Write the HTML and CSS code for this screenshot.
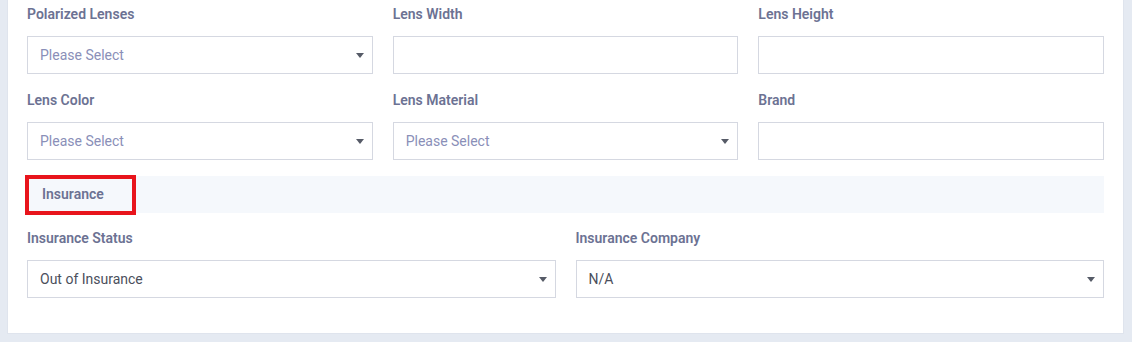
FILE: index.html
```html
<!DOCTYPE html>
<html lang="en">
<head>
    <meta charset="UTF-8">
    <meta name="viewport" content="width=device-width, initial-scale=1.0">
    <title>Frame Details</title>
    <link rel="stylesheet" href="styles.css">
</head>
<body>
   <div class="page">
       <div class="card">
           <!--镜片信息-->
           <div class="row row-3">
               <div class="field">
                   <label>Polarized Lenses</label>
                   <div class="select">
                       <select class="empty">
                           <option>Please Select</option>
                           <option>Yes</option>
                           <option>No</option>
                       </select>
                   </div>
               </div>
               <div class="field">
                   <label>Lens Width</label>
                   <input type="text">
               </div>
               <div class="field">
                   <label>Lens Height</label>
                   <input type="text">
               </div>
           </div>
           <div class="row row-3">
               <div class="field">
                   <label>Lens Color</label>
                   <div class="select">
                       <select class="empty">
                           <option>Please Select</option>
                       </select>
                   </div>
               </div>
               <div class="field">
                   <label>Lens Material</label>
                   <div class="select">
                       <select class="empty">
                           <option>Please Select</option>
                       </select>
                   </div>
               </div>
               <div class="field">
                   <label>Brand</label>
                   <input type="text">
               </div>
           </div>

           <!--保险-->
           <div class="section">
               <span class="section-title">Insurance</span>
           </div>
           <div class="row row-2">
               <div class="field">
                   <label>Insurance Status</label>
                   <div class="select">
                       <select>
                           <option>Out of Insurance</option>
                           <option>In Insurance</option>
                       </select>
                   </div>
               </div>
               <div class="field">
                   <label>Insurance Company</label>
                   <div class="select">
                       <select>
                           <option>N/A</option>
                       </select>
                   </div>
               </div>
           </div>
       </div>
   </div>
</body>
</html>
```

FILE: styles.css
```css
*{
    margin: 0;
    padding: 0;
    box-sizing: border-box;
}

body{
    background-color: #e5eaf2;
    font-family: Roboto, "Liberation Sans", sans-serif;
}

.page{
    padding: 0 8px 8px 7px;
}

.card{
    background-color: #fff;
    border: 1px solid #dfe4ed;
    border-top: none;
    padding: 6px 19px 35px 19px;
}

.row{
    display: grid;
    column-gap: 20px;
    margin-bottom: 18px;
}

.row:last-child{
    margin-bottom: 0;
}

.row-3{
    grid-template-columns: repeat(3, 1fr);
}

.row-2{
    grid-template-columns: repeat(2, 1fr);
}

.field label{
    display: block;
    height: 16px;
    line-height: 16px;
    margin-bottom: 14px;
    font-size: 14px;
    font-weight: 600;
    color: #6c7293;
}

.field input,
.field select{
    display: block;
    width: 100%;
    height: 38px;
    border: 1px solid #d5d8e1;
    border-radius: 0;
    background-color: #fff;
    padding: 0 28px 0 12px;
    font-family: inherit;
    font-size: 14px;
    color: #4b4f5c;
    outline: none;
    -webkit-appearance: none;
    appearance: none;
}

.field select.empty{
    color: #8a8fb8;
}

/*下拉箭头*/
.select{
    position: relative;
}

.select::after{
    content: "";
    position: absolute;
    right: 9px;
    top: 17px;
    border-left: 4px solid transparent;
    border-right: 4px solid transparent;
    border-top: 5px solid #565b67;
    pointer-events: none;
}

.section{
    display: flex;
    align-items: flex-start;
    height: 37px;
    margin: -2px 0 17px 0;
    background-color: #f5f8fc;
}

.section-title{
    display: flex;
    align-items: center;
    width: 111px;
    height: 40px;
    margin: -1px 0 0 -2px;
    padding: 0 0 3px 13px;
    border: 4px solid #e8141c;
    font-size: 14px;
    font-weight: 600;
    color: #6c7293;
}
```
